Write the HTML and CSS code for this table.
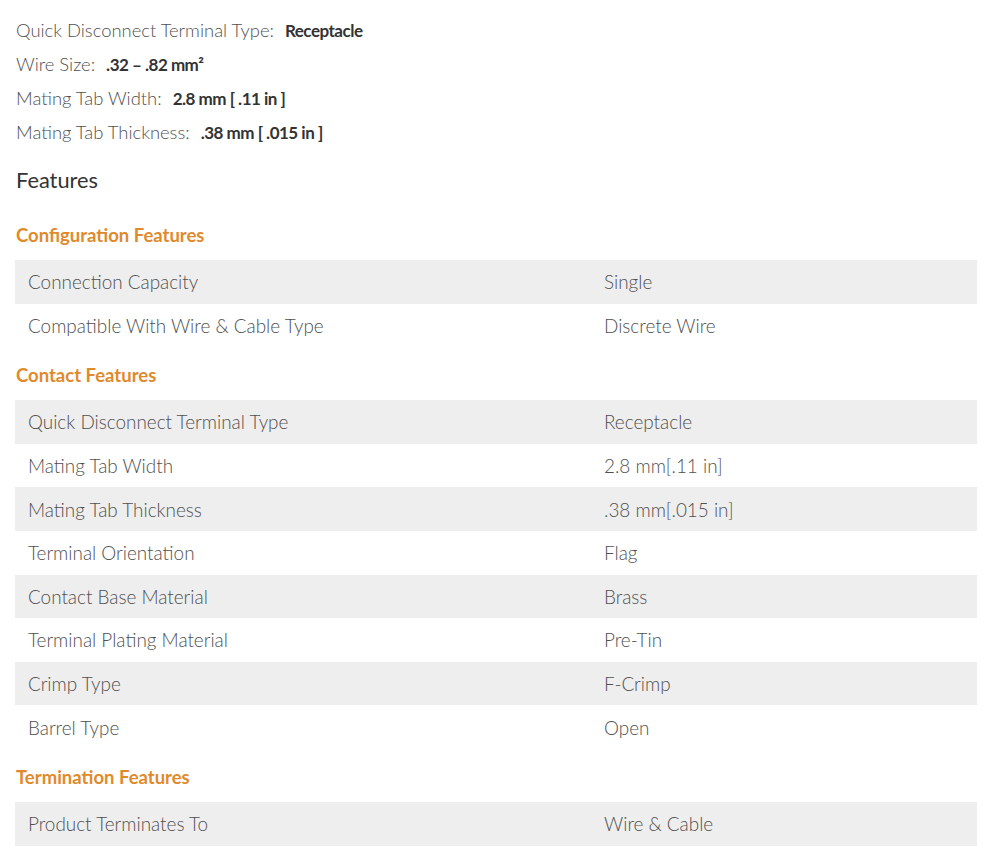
FILE: index.html
```html
<!DOCTYPE html>
<html>
<head>
<meta charset="utf-8">
<link rel="stylesheet" href="styles.css">
</head>
<body>
<div class="page">
  <div class="specs">
    <div class="spec"><span class="spec-label">Quick Disconnect Terminal Type:</span><span class="spec-value">Receptacle</span></div>
    <div class="spec"><span class="spec-label">Wire Size:</span><span class="spec-value">.32 – .82 mm²</span></div>
    <div class="spec"><span class="spec-label">Mating Tab Width:</span><span class="spec-value">2.8 mm [ .11 in ]</span></div>
    <div class="spec"><span class="spec-label">Mating Tab Thickness:</span><span class="spec-value">.38 mm [ .015 in ]</span></div>
  </div>
  <h2 class="features-title">Features</h2>

  <h3 class="group-title">Configuration Features</h3>
  <div class="table">
    <div class="row"><div class="cell">Connection Capacity</div><div class="cell">Single</div></div>
    <div class="row"><div class="cell">Compatible With Wire &amp; Cable Type</div><div class="cell">Discrete Wire</div></div>
  </div>

  <h3 class="group-title">Contact Features</h3>
  <div class="table">
    <div class="row"><div class="cell">Quick Disconnect Terminal Type</div><div class="cell">Receptacle</div></div>
    <div class="row"><div class="cell">Mating Tab Width</div><div class="cell">2.8 mm[.11 in]</div></div>
    <div class="row"><div class="cell">Mating Tab Thickness</div><div class="cell">.38 mm[.015 in]</div></div>
    <div class="row"><div class="cell">Terminal Orientation</div><div class="cell">Flag</div></div>
    <div class="row"><div class="cell">Contact Base Material</div><div class="cell">Brass</div></div>
    <div class="row"><div class="cell">Terminal Plating Material</div><div class="cell">Pre-Tin</div></div>
    <div class="row"><div class="cell">Crimp Type</div><div class="cell">F-Crimp</div></div>
    <div class="row"><div class="cell">Barrel Type</div><div class="cell">Open</div></div>
  </div>

  <h3 class="group-title">Termination Features</h3>
  <div class="table">
    <div class="row"><div class="cell">Product Terminates To</div><div class="cell">Wire &amp; Cable</div></div>
  </div>
</div>
</body>
</html>
```
FILE: styles.css
```css
html, body {
  margin: 0;
  padding: 0;
  background: #ffffff;
}
body {
  font-family: Lato, "Open Sans", sans-serif;
  color: #505050;
}
.page {
  width: 962px;
  padding: 13px 0 0 15px;
  display: flex;
  flex-direction: column;
}
.specs {
  padding-left: 1px;
}
.spec {
  height: 34px;
  line-height: 34px;
  font-size: 18.4px;
  display: flex;
  align-items: baseline;
  gap: 11px;
}
.spec-label {
  font-weight: 300;
  color: #505050;
}
.spec-value {
  font-weight: 700;
  font-size: 17px;
  color: #333333;
  letter-spacing: -0.5px;
}
.features-title {
  margin: 16px 0 12px 1px;
  font-size: 21.8px;
  line-height: 30px;
  font-weight: 400;
  color: #333333;
}
.group-title {
  margin: 15px 0 12px 1px;
  font-size: 18.5px;
  line-height: 26px;
  font-weight: 700;
  color: #e08a2c;
}
.table {
  display: flex;
  flex-direction: column;
}
.row {
  display: grid;
  grid-template-columns: 576px 1fr;
  height: 43.6px;
  align-items: center;
  font-size: 18.9px;
  font-weight: 300;
  color: #505050;
}
.row:nth-child(odd) {
  background: #eeeeee;
}
.cell {
  padding-left: 13px;
}
```
